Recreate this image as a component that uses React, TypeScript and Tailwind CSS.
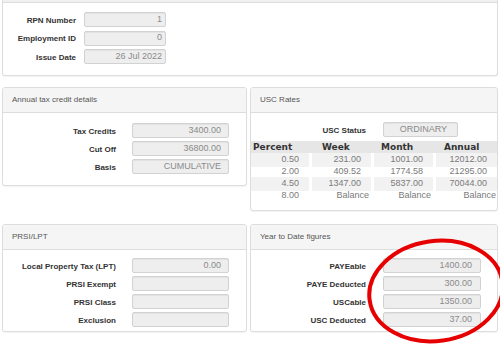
import type { ReactNode } from "react";

const font = { fontFamily: '"Liberation Sans", Arial, sans-serif' };

function Panel({ title, className = "", children }: { title: string; className?: string; children: ReactNode }) {
  return (
    <div className={`border border-[#dddddd] rounded-[3px] bg-white shadow-[0_1px_1px_rgba(0,0,0,0.05)] ${className}`}>
      <div className="h-[25px] bg-[#f5f5f5] border-b border-[#dddddd] rounded-t-[3px] pl-[9px] flex items-center text-[8px] text-[#555555]">
        {title}
      </div>
      {children}
    </div>
  );
}

function Field({
  label,
  value = "",
  labelW,
  gap,
  inputW,
  pad = "pr-[7px]",
}: {
  label: string;
  value?: string;
  labelW: string;
  gap: string;
  inputW: string;
  pad?: string;
}) {
  return (
    <div className={`flex items-center ${gap}`}>
      <div className={`${labelW} text-right text-[8px] font-bold text-[#333333] leading-none pt-[2px]`}>{label}</div>
      <div
        className={`${inputW} h-[15px] bg-[#eeeeee] border border-[#d2d2d2] rounded-[2px] shadow-[inset_0_1px_1px_rgba(0,0,0,0.05)] flex items-center justify-end ${pad} text-[9px] text-[#8a8a8a]`}
      >
        {value}
      </div>
    </div>
  );
}

const rates = [
  ["0.50", "231.00", "1001.00", "12012.00"],
  ["2.00", "409.52", "1774.58", "21295.00"],
  ["4.50", "1347.00", "5837.00", "70044.00"],
];

function UscTable() {
  return (
    <div className="mt-[4px]">
      <div
        className="grid grid-cols-[58px_59px_59px_1fr] gap-x-[3px] h-[12px] bg-[#e6e6e6] items-center text-[9px] font-bold text-[#333333]"
        style={{ fontFamily: '"DejaVu Sans", Verdana, sans-serif' }}
      >
        <div className="pl-[2px]">Percent</div>
        <div className="pl-[10px]">Week</div>
        <div className="pl-[7px]">Month</div>
        <div className="pl-[8px]">Annual</div>
      </div>
      {rates.map((r, i) => (
        <div key={r[0]} className="grid grid-cols-[58px_59px_59px_1fr] gap-x-[3px] h-[12px] text-[9px] text-[#7a7a7a]">
          {r.map((v) => (
            <div key={v} className={`flex items-center justify-end pr-[10px] ${i === 1 ? "" : "bg-[#f2f2f2]"}`}>
              {v}
            </div>
          ))}
        </div>
      ))}
      <div className="grid grid-cols-[58px_59px_59px_1fr] gap-x-[3px] h-[12px] text-[9px] text-[#7a7a7a]">
        <div className="flex items-center justify-end pr-[10px]">8.00</div>
        <div className="flex items-center justify-end pr-[2px]">Balance</div>
        <div className="flex items-center justify-end pr-[2px]">Balance</div>
        <div className="flex items-center justify-end pr-[1px]">Balance</div>
      </div>
    </div>
  );
}

export default function App() {
  return (
    <div className="relative w-[500px] h-[344px] overflow-hidden bg-white px-[2px]" style={font}>
      {/* employment header panel, scrolled so its title is cut */}
      <div className="border-x border-b border-[#dddddd] rounded-b-[3px] bg-white shadow-[0_1px_1px_rgba(0,0,0,0.05)]">
        <div className="h-[3px] bg-[#f0f0f0] border-b border-[#dddddd]" />
        <div className="pt-[9px] pb-[11px] flex flex-col gap-[3.5px]">
          <Field label="RPN Number" value="1" labelW="w-[73px]" gap="gap-[8px]" inputW="w-[82px]" pad="pr-[3px]" />
          <Field label="Employment ID" value="0" labelW="w-[73px]" gap="gap-[8px]" inputW="w-[82px]" pad="pr-[3px]" />
          <Field label="Issue Date" value="26 Jul 2022" labelW="w-[73px]" gap="gap-[8px]" inputW="w-[82px]" pad="pr-[3px]" />
        </div>
      </div>

      <div className="mt-[11px] grid grid-cols-[245px_248px] gap-x-[3px] items-start">
        <Panel title="Annual tax credit details">
          <div className="pt-[10px] pb-[11px] flex flex-col gap-[3px]">
            <Field label="Tax Credits" value="3400.00" labelW="w-[113px]" gap="gap-[16px]" inputW="w-[97px]" />
            <Field label="Cut Off" value="36800.00" labelW="w-[113px]" gap="gap-[16px]" inputW="w-[97px]" />
            <Field label="Basis" value="CUMULATIVE" labelW="w-[113px]" gap="gap-[16px]" inputW="w-[97px]" />
          </div>
        </Panel>
        <Panel title="USC Rates">
          <div className="pt-[9px] pb-[9px]">
            <Field label="USC Status" value="ORDINARY" labelW="w-[115px]" gap="gap-[17px]" inputW="w-[75px]" pad="pr-[10px]" />
            <UscTable />
          </div>
        </Panel>
      </div>

      <div className="mt-[13px] grid grid-cols-[245px_248px] gap-x-[3px]">
        <Panel title="PRSI/LPT">
          <div className="pt-[8px] pb-[4px] flex flex-col gap-[3px]">
            <Field label="Local Property Tax (LPT)" value="0.00" labelW="w-[113px]" gap="gap-[16px]" inputW="w-[97px]" />
            <Field label="PRSI Exempt" labelW="w-[113px]" gap="gap-[16px]" inputW="w-[97px]" />
            <Field label="PRSI Class" labelW="w-[113px]" gap="gap-[16px]" inputW="w-[97px]" />
            <Field label="Exclusion" labelW="w-[113px]" gap="gap-[16px]" inputW="w-[97px]" />
          </div>
        </Panel>
        <Panel title="Year to Date figures">
          <div className="pt-[8px] pb-[4px] flex flex-col gap-[3px]">
            <Field label="PAYEable" value="1400.00" labelW="w-[115px]" gap="gap-[17px]" inputW="w-[98px]" pad="pr-[8px]" />
            <Field label="PAYE Deducted" value="300.00" labelW="w-[115px]" gap="gap-[17px]" inputW="w-[98px]" pad="pr-[8px]" />
            <Field label="USCable" value="1350.00" labelW="w-[115px]" gap="gap-[17px]" inputW="w-[98px]" pad="pr-[8px]" />
            <Field label="USC Deducted" value="37.00" labelW="w-[115px]" gap="gap-[17px]" inputW="w-[98px]" pad="pr-[8px]" />
          </div>
        </Panel>
      </div>

      {/* red highlight drawn over the year to date figures */}
      <svg className="absolute inset-0 pointer-events-none" width="500" height="344">
        <ellipse
          cx="436"
          cy="291"
          rx="67"
          ry="50"
          transform="rotate(-8 436 291)"
          fill="none"
          stroke="#e60000"
          strokeWidth="4"
        />
      </svg>
    </div>
  );
}
